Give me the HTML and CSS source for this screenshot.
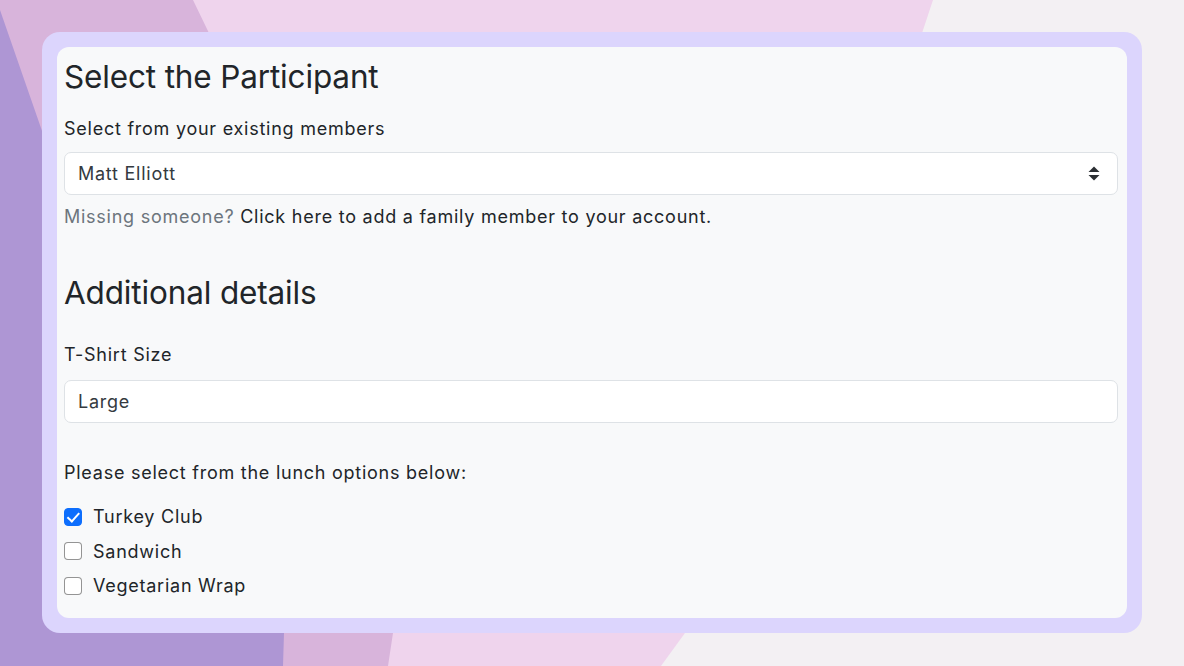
FILE: index.html
```html
<!DOCTYPE html>
<html lang="en">
<head>
  <meta charset="UTF-8">
  <meta name="viewport" content="width=device-width, initial-scale=1.0">
  <title>Select the Participant</title>
  <link rel="stylesheet" href="styles.css">
</head>
<body>
  <div class="stage">
    <svg class="backdrop" width="1184" height="666" viewBox="0 0 1184 666" aria-hidden="true">
      <rect width="1184" height="666" fill="#f3f0f3"/>
      <polygon points="0,0 933,0 760,520 685,633 661,666 0,666" fill="#efd4ed"/>
      <polygon points="0,0 193,0 420,470 393,633 388,666 0,666" fill="#d8b4db"/>
      <polygon points="0,10 205,600 284,633 283,666 0,666" fill="#ae96d4"/>
    </svg>

    <div class="card">
      <div class="card-body">
        <h2 class="section-title">Select the Participant</h2>

        <label class="form-label" for="member">Select from your existing members</label>
        <div class="select-wrap">
          <select id="member" class="form-select">
            <option>Matt Elliott</option>
          </select>
          <svg class="select-arrows" width="12" height="15" viewBox="0 0 12 15" aria-hidden="true">
            <path d="M6 0.5 L11.5 6 H0.5 Z" fill="#2b2f33"/>
            <path d="M6 14.5 L11.5 9 H0.5 Z" fill="#2b2f33"/>
          </svg>
        </div>
        <p class="form-text">
          <span class="muted">Missing someone?</span>
          <a href="#" class="plain-link">Click here to add a family member to your account.</a>
        </p>

        <h2 class="section-title details-title">Additional details</h2>

        <label class="form-label shirt-label" for="shirt">T-Shirt Size</label>
        <input type="text" id="shirt" class="form-control" value="Large">

        <p class="lunch-prompt">Please select from the lunch options below:</p>

        <div class="check-list">
          <label class="form-check">
            <input type="checkbox" class="check-input" checked>
            <span>Turkey Club</span>
          </label>
          <label class="form-check">
            <input type="checkbox" class="check-input">
            <span>Sandwich</span>
          </label>
          <label class="form-check">
            <input type="checkbox" class="check-input">
            <span>Vegetarian Wrap</span>
          </label>
        </div>
      </div>
    </div>
  </div>
</body>
</html>
```

FILE: styles.css
```css
body {
  margin: 0;
  font-family: Inter, "Noto Sans", "Liberation Sans", sans-serif;
  font-size: 18px;
  line-height: 1.5;
  letter-spacing: 0.75px;
  color: #212529;
  background-color: #f3f0f3;
}

.stage {
  position: relative;
  width: 1184px;
  height: 666px;
  overflow: hidden;
  padding: 32px 42px 0 42px;
  box-sizing: border-box;
}

.backdrop {
  position: absolute;
  top: 0;
  left: 0;
  z-index: 0;
}

.card {
  position: relative;
  z-index: 1;
  height: 601px;
  box-sizing: border-box;
  padding: 15px;
  background-color: #dcd5fd;
  border-radius: 18px;
}

.card-body {
  height: 100%;
  box-sizing: border-box;
  padding: 11px 9px 0 7px;
  background-color: #f8f9fa;
  border-radius: 12px;
}

.section-title {
  margin: 0;
  font-size: 31.5px;
  font-weight: 400;
  line-height: 1.2;
  letter-spacing: -0.15px;
}

.details-title {
  margin-top: 44.5px;
}

.form-label {
  display: block;
  margin-top: 19.5px;
  margin-bottom: 9.5px;
}

.shirt-label {
  margin-top: 28.5px;
  margin-bottom: 12.5px;
}

.select-wrap {
  position: relative;
}

.form-select,
.form-control {
  display: block;
  width: 100%;
  height: 43px;
  box-sizing: border-box;
  padding: 0 13px;
  font-family: inherit;
  font-size: 18px;
  letter-spacing: 0.75px;
  color: #343a40;
  background-color: #ffffff;
  border: 1px solid #dee2e6;
  border-radius: 7px;
  appearance: none;
  -webkit-appearance: none;
  outline: none;
}

.select-arrows {
  position: absolute;
  right: 18px;
  top: 14px;
  pointer-events: none;
}

.form-text {
  margin: 8px 0 0 0;
}

.muted {
  color: #6c757d;
}

.plain-link {
  color: #212529;
  text-decoration: none;
}

.lunch-prompt {
  margin: 35.5px 0 0 0;
}

.check-list {
  display: flex;
  flex-direction: column;
  gap: 7.5px;
  margin-top: 17.5px;
}

.form-check {
  display: flex;
  align-items: center;
  gap: 11px;
}

.check-input {
  appearance: none;
  -webkit-appearance: none;
  margin: 0;
  width: 18px;
  height: 18px;
  border: 1px solid rgba(0, 0, 0, 0.42);
  border-radius: 4px;
  background-color: #ffffff;
  position: relative;
}

.check-input:checked {
  background-color: #0d6efd;
  border-color: #0d6efd;
}

.check-input:checked::after {
  content: "";
  position: absolute;
  left: 5px;
  top: 1.5px;
  width: 5px;
  height: 9.5px;
  border: solid #ffffff;
  border-width: 0 2.5px 2.5px 0;
  transform: rotate(42deg);
}
```
